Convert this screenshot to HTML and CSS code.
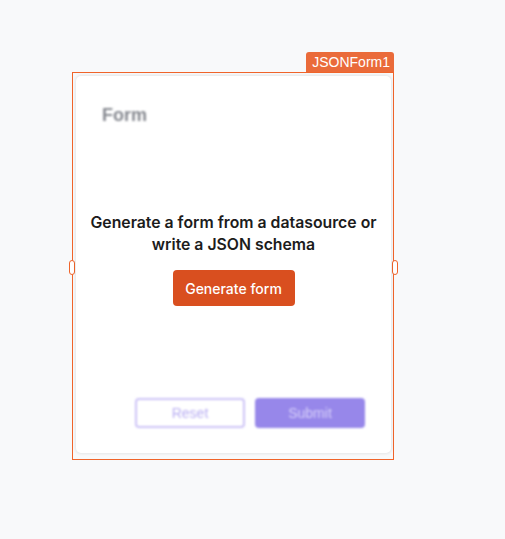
FILE: index.html
```html
<!DOCTYPE html>
<html>
<head>
<meta charset="utf-8">
<link rel="stylesheet" href="styles.css">
</head>
<body>
<div class="canvas">
  <div class="widget">
    <div class="label">JSONForm1</div>
    <span class="handle handle-left"></span>
    <span class="handle handle-right"></span>
    <div class="card">
      <div class="ghost">
        <div class="ghost-title">Form</div>
        <div class="ghost-actions">
          <div class="ghost-btn reset">Reset</div>
          <div class="ghost-btn submit">Submit</div>
        </div>
      </div>
      <div class="overlay">
        <p class="message">Generate a form from a datasource or<br>write a JSON schema</p>
        <button class="generate">Generate form</button>
      </div>
    </div>
  </div>
</div>
</body>
</html>
```

FILE: styles.css
```css
html, body {
  margin: 0;
  padding: 0;
  background: #f8f9fa;
  font-family: Inter, "Liberation Sans", sans-serif;
}
.canvas {
  padding: 72px 0 0 72px;
}
.widget {
  position: relative;
  width: 322px;
  height: 388px;
  border: 1px solid #f0642a;
  box-sizing: border-box;
  padding: 3px 2px 6px 3px;
}
.label {
  position: absolute;
  top: -21px;
  right: -1px;
  height: 20px;
  padding: 0 4px 0 6px;
  background: #ea6b3a;
  color: #fff;
  font-family: "Liberation Sans", Arial, sans-serif;
  font-size: 14px;
  line-height: 20px;
  border-radius: 3px 3px 0 0;
}
.handle {
  position: absolute;
  top: 187px;
  width: 4px;
  height: 13px;
  border: 1px solid #f0642a;
  background: #fff;
  border-radius: 3px;
}
.handle-left { left: -4px; }
.handle-right { right: -5px; }
.card {
  position: relative;
  height: 100%;
  background: #fff;
  border-radius: 5px;
  box-shadow: 0 0 3px 1px rgba(0,0,0,0.08);
  overflow: hidden;
}
.ghost {
  height: 100%;
  display: flex;
  flex-direction: column;
  justify-content: space-between;
  padding: 29px 26px 25px 26px;
  box-sizing: border-box;
  filter: blur(1px);
}
.ghost-title {
  font-family: "Liberation Sans", Arial, sans-serif;
  font-weight: 700;
  font-size: 18px;
  color: #868990;
}
.ghost-actions {
  display: flex;
  justify-content: flex-end;
  gap: 10px;
}
.ghost-btn {
  width: 110px;
  height: 30px;
  box-sizing: border-box;
  border-radius: 4px;
  display: flex;
  align-items: center;
  justify-content: center;
  font-family: "Liberation Sans", Arial, sans-serif;
  font-size: 14px;
}
.reset {
  border: 2px solid #cdc4f7;
  color: #b8adf2;
  background: #fff;
}
.submit {
  background: #9787ea;
  color: #d9d2fa;
}
.overlay {
  position: absolute;
  inset: 0;
  display: flex;
  flex-direction: column;
  align-items: center;
  justify-content: center;
  padding-bottom: 11px;
  box-sizing: border-box;
}
.message {
  margin: 0 0 14px;
  text-align: center;
  font-weight: 600;
  font-size: 15.8px;
  line-height: 22px;
  color: #1c1c1c;
}
.generate {
  width: 122px;
  height: 36px;
  border: none;
  border-radius: 4px;
  background: #d94f1f;
  color: #fff;
  font-family: Inter, "Liberation Sans", sans-serif;
  font-weight: 500;
  font-size: 14px;
  padding: 0;
}
```
